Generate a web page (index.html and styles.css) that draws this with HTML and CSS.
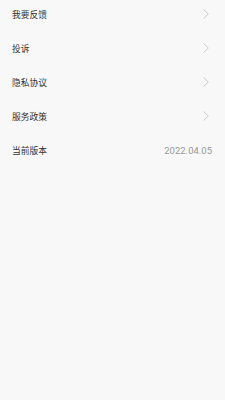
FILE: index.html
```html
<!DOCTYPE html>
<html>
<head>
<meta charset="utf-8">
<link rel="stylesheet" href="styles.css">
</head>
<body>
<div class="list">
  <div class="row"><span class="label">我要反馈</span><svg class="chev" viewBox="0 0 6 10"><path d="M0.5 0.5 L5.3 5 L0.5 9.5" /></svg></div>
  <div class="row"><span class="label">投诉</span><svg class="chev" viewBox="0 0 6 10"><path d="M0.5 0.5 L5.3 5 L0.5 9.5" /></svg></div>
  <div class="row"><span class="label">隐私协议</span><svg class="chev" viewBox="0 0 6 10"><path d="M0.5 0.5 L5.3 5 L0.5 9.5" /></svg></div>
  <div class="row"><span class="label">服务政策</span><svg class="chev" viewBox="0 0 6 10"><path d="M0.5 0.5 L5.3 5 L0.5 9.5" /></svg></div>
  <div class="row"><span class="label">当前版本</span><span class="value">2022.04.05</span></div>
</div>
</body>
</html>
```
FILE: styles.css
```css
html, body {
  margin: 0;
  padding: 0;
  background: #f8f8f8;
  height: 100%;
}
body {
  font-family: "Noto Sans CJK SC", "Noto Sans", sans-serif;
}
.list {
  margin-top: -3px;
  padding: 0 12px 0 12px;
}
.row {
  height: 34px;
  display: flex;
  align-items: center;
  justify-content: space-between;
}
.label {
  font-size: 8.75px;
  color: #333;
}
.value {
  font-size: 9.5px;
  color: #999;
  font-family: "Roboto", "Noto Sans", sans-serif;
  margin-right: 1px;
}
.chev {
  width: 6px;
  height: 10px;
  margin-right: 4px;
  fill: none;
  stroke: #c8c8c8;
  stroke-width: 0.9;
}
```
